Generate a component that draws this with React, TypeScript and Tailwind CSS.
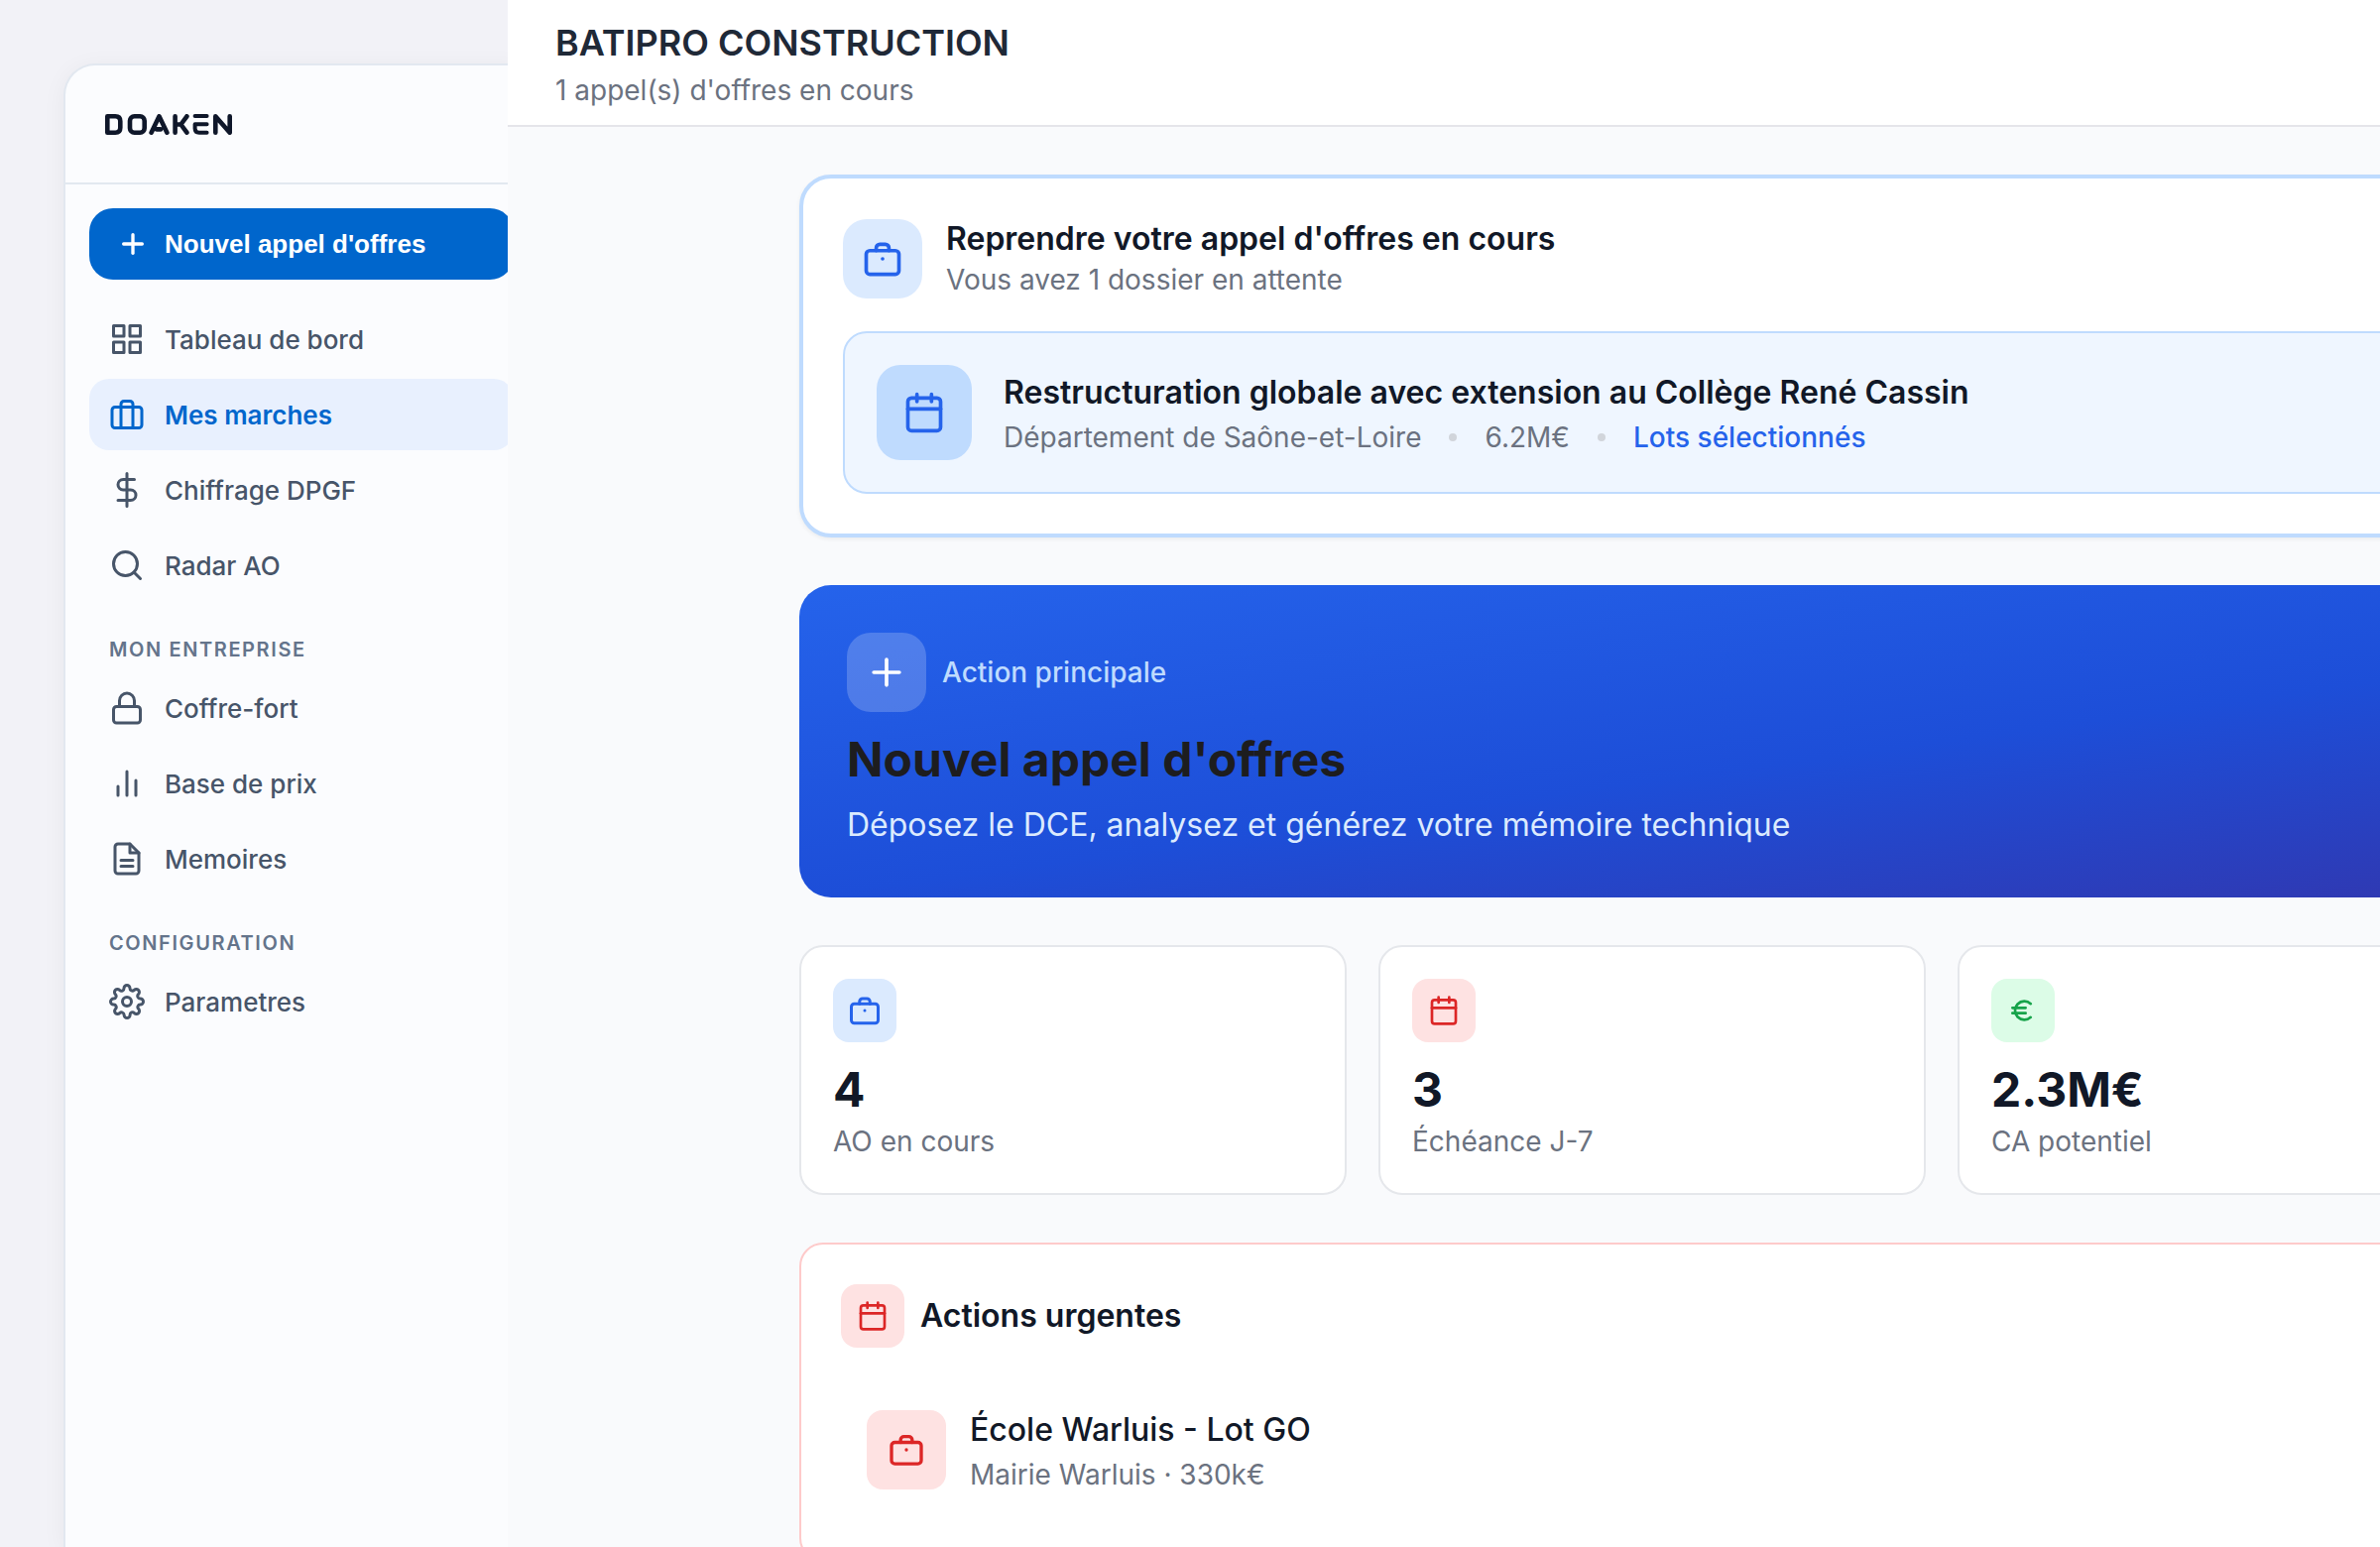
import React from 'react';
import { Calendar, Lock, Plus, Search } from 'lucide-react';
import clsx from 'clsx';

type IconProps = { className?: string };

const stroke = {
  viewBox: '0 0 24 24',
  fill: 'none',
  stroke: 'currentColor',
  strokeWidth: 2,
  strokeLinecap: 'round' as const,
  strokeLinejoin: 'round' as const,
  'aria-hidden': true,
};

function Logo() {
  return (
    <svg
      viewBox="0 0 128 21"
      className="h-[21px] w-32 text-[#0f172a]"
      fill="none"
      stroke="currentColor"
      strokeWidth="4.6"
      strokeLinejoin="round"
      strokeLinecap="round"
      role="img"
      aria-label="Doaken"
    >
      <path d="M2.3 2.3h8q5 0 5 5v6.4q0 5-5 5h-8z" />
      <rect x="25" y="2.3" width="14.7" height="16.4" rx="4.5" />
      <path d="M46.6 18.7 54.5 2.3l7.9 16.4M52 15.4h4" />
      <path d="M70.6 2.3v16.4M82.4 2.3l-6 8.2 6 8.2M70.6 10.5h5.8" />
      <path
        strokeWidth="4"
        d="M90.6 2.1h12M102.6 10.2h-12v4.4q0 4.2 4.2 4.2h7.8"
      />
      <path d="M111.3 18.7V2.3l14.4 16.4V2.3" />
    </svg>
  );
}

function GridIcon({ className }: IconProps) {
  return (
    <svg {...stroke} className={className}>
      <path d="M3 3h7v7H3zM14 3h7v7h-7zM14 14h7v7h-7zM3 14h7v7H3z" />
    </svg>
  );
}

function SuitcaseIcon({ className }: IconProps) {
  return (
    <svg {...stroke} className={className}>
      <rect x="2" y="7" width="20" height="14" rx="2" />
      <path d="M16 21V5a2 2 0 0 0-2-2h-4a2 2 0 0 0-2 2v16" />
    </svg>
  );
}

function DollarIcon({ className }: IconProps) {
  return (
    <svg {...stroke} className={className}>
      <path d="M12 1v22M17 5H9.5a3.5 3.5 0 0 0 0 7h5a3.5 3.5 0 0 1 0 7H6" />
    </svg>
  );
}

function BarsIcon({ className }: IconProps) {
  return (
    <svg {...stroke} className={className}>
      <path d="M18 20V10M12 20V4M6 20v-6" />
    </svg>
  );
}

function FileIcon({ className }: IconProps) {
  return (
    <svg {...stroke} className={className}>
      <path d="M14 2H6a2 2 0 0 0-2 2v16a2 2 0 0 0 2 2h12a2 2 0 0 0 2-2V8z" />
      <path d="M14 2v6h6M16 13H8M16 17H8" />
    </svg>
  );
}

function GearIcon({ className }: IconProps) {
  return (
    <svg {...stroke} className={className}>
      <circle cx="12" cy="12" r="3" />
      <path d="M19.4 15a1.65 1.65 0 0 0 .33 1.82l.06.06a2 2 0 0 1 0 2.83 2 2 0 0 1-2.83 0l-.06-.06a1.65 1.65 0 0 0-1.82-.33 1.65 1.65 0 0 0-1 1.51V21a2 2 0 0 1-2 2 2 2 0 0 1-2-2v-.09A1.65 1.65 0 0 0 9 19.4a1.65 1.65 0 0 0-1.82.33l-.06.06a2 2 0 0 1-2.83 0 2 2 0 0 1 0-2.83l.06-.06a1.65 1.65 0 0 0 .33-1.82 1.65 1.65 0 0 0-1.51-1H3a2 2 0 0 1-2-2 2 2 0 0 1 2-2h.09A1.65 1.65 0 0 0 4.6 9a1.65 1.65 0 0 0-.33-1.82l-.06-.06a2 2 0 0 1 0-2.83 2 2 0 0 1 2.83 0l.06.06a1.65 1.65 0 0 0 1.82.33H9a1.65 1.65 0 0 0 1-1.51V3a2 2 0 0 1 2-2 2 2 0 0 1 2 2v.09a1.65 1.65 0 0 0 1 1.51 1.65 1.65 0 0 0 1.82-.33l.06-.06a2 2 0 0 1 2.83 0 2 2 0 0 1 0 2.83l-.06.06a1.65 1.65 0 0 0-.33 1.82V9a1.65 1.65 0 0 0 1.51 1H21a2 2 0 0 1 2 2 2 2 0 0 1-2 2h-.09a1.65 1.65 0 0 0-1.51 1z" />
    </svg>
  );
}

function BriefcaseIcon({ className }: IconProps) {
  return (
    <svg {...stroke} className={className}>
      <rect x="3" y="7.5" width="18" height="13" rx="2" />
      <path d="M8.5 7.5V6a2 2 0 0 1 2-2h3a2 2 0 0 1 2 2v1.5M12 12h.01" />
    </svg>
  );
}

function EuroIcon({ className }: IconProps) {
  return (
    <svg {...stroke} className={className}>
      <path d="M17.8 6.9a7 7 0 1 0 0 10.2M4 10h10M4 14h10" />
    </svg>
  );
}

const mainLinks = [
  { label: 'Tableau de bord', icon: GridIcon },
  { label: 'Mes marches', icon: SuitcaseIcon, active: true },
  { label: 'Chiffrage DPGF', icon: DollarIcon },
  { label: 'Radar AO', icon: Search },
];

const companyLinks = [
  { label: 'Coffre-fort', icon: Lock },
  { label: 'Base de prix', icon: BarsIcon },
  { label: 'Memoires', icon: FileIcon },
];

const configLinks = [{ label: 'Parametres', icon: GearIcon }];

const stats = [
  {
    label: 'AO en cours',
    value: '4',
    icon: BriefcaseIcon,
    iconSize: 'size-9',
    tone: 'bg-[#dbeafe] text-[#2563eb]',
  },
  {
    label: 'Échéance J-7',
    value: '3',
    icon: Calendar,
    iconSize: 'size-8',
    tone: 'bg-[#fee2e2] text-[#dc2626]',
  },
  {
    label: 'CA potentiel',
    value: '2.3M€',
    icon: EuroIcon,
    iconSize: 'size-8',
    tone: 'bg-[#dcfce7] text-[#16a34a]',
  },
];

type NavLink = {
  label: string;
  icon: React.ComponentType<IconProps>;
  active?: boolean;
};

function NavList({ title, links }: { title?: string; links: NavLink[] }) {
  return (
    <div>
      {title && (
        <h2 className="px-5 pt-8 pb-[6px] text-[20px] leading-[34px] font-semibold tracking-[0.08em] text-[#64748b] uppercase">
          {title}
        </h2>
      )}
      <ul className="flex flex-col gap-1">
        {links.map(({ label, icon: Icon, active }) => (
          <li key={label}>
            <a
              href="#"
              className={clsx(
                'flex h-[72px] items-center gap-5 rounded-[20px] px-5 text-[26px]',
                active
                  ? 'bg-[#e8f0fe] font-semibold text-[#0066cc]'
                  : 'font-medium text-[#475569]'
              )}
            >
              <Icon className="size-9" />
              {label}
            </a>
          </li>
        ))}
      </ul>
    </div>
  );
}

function Sidebar() {
  return (
    <aside className="w-[512px] shrink-0 overflow-hidden pt-16 pl-16">
      <div className="h-full w-[480px] rounded-t-[32px] border-2 border-b-0 border-[#e2e8f0] bg-[#fbfcfe] shadow-[0_4px_24px_rgba(15,23,42,0.05)]">
        <div className="flex h-[120px] items-center border-b-2 border-[#e2e8f0] px-10">
          <Logo />
        </div>
        <nav className="p-6">
          <button
            type="button"
            className="mb-6 flex h-[72px] w-full items-center gap-4 rounded-[24px] bg-[#0066cc] px-7 font-['Liberation_Sans',Arial,sans-serif] text-[26px] font-semibold text-white"
          >
            <Plus className="size-8" strokeWidth={2.5} />
            Nouvel appel d'offres
          </button>
          <NavList links={mainLinks} />
          <NavList title="Mon entreprise" links={companyLinks} />
          <NavList title="Configuration" links={configLinks} />
        </nav>
      </div>
    </aside>
  );
}

function ResumeCard() {
  return (
    <section className="rounded-[32px] border-4 border-[#bfdbfe] bg-white p-10 shadow-[0_2px_4px_rgba(0,0,0,0.06)]">
      <div className="mb-8 flex items-center gap-6">
        <div className="flex size-20 items-center justify-center rounded-[24px] bg-[#dbeafe] text-[#2563eb]">
          <BriefcaseIcon className="size-11" />
        </div>
        <div>
          <h2 className="text-[32px] leading-[42px] font-semibold text-[#111827]">
            Reprendre votre appel d'offres en cours
          </h2>
          <p className="text-[28px] leading-10 text-[#6b7280]">
            Vous avez 1 dossier en attente
          </p>
        </div>
      </div>
      <a
        href="#"
        className="flex h-[164px] items-center gap-8 rounded-[24px] border-2 border-[#bfdbfe] bg-[#eff6ff] px-8"
      >
        <div className="flex size-24 items-center justify-center rounded-[24px] bg-[#bfdbfe] text-[#2563eb]">
          <Calendar className="size-11" />
        </div>
        <div>
          <p className="text-[32px] leading-[50px] font-semibold text-[#111827]">
            Restructuration globale avec extension au Collège René Cassin
          </p>
          <div className="flex items-center gap-7 text-[28px] leading-10 text-[#6b7280]">
            <span>Département de Saône-et-Loire</span>
            <span className="size-2 rounded-full bg-[#d1d5db]" />
            <span>6.2M€</span>
            <span className="size-2 rounded-full bg-[#d1d5db]" />
            <span className="font-medium text-[#2563eb]">Lots sélectionnés</span>
          </div>
        </div>
      </a>
    </section>
  );
}

function NewTenderCard() {
  return (
    <a
      href="#"
      className="block rounded-[32px] bg-[linear-gradient(to_bottom_right,#2563eb,#1d4ed8,#3730a3)] p-12"
    >
      <div className="mb-4 flex items-center gap-4">
        <div className="flex size-20 items-center justify-center rounded-[24px] bg-white/20 text-white">
          <Plus className="size-11" />
        </div>
        <span className="text-[28px] leading-10 font-medium text-[#bfdbfe]">
          Action principale
        </span>
      </div>
      <h2 className="mb-2 text-[48px] leading-16 font-bold text-[#1d1d1f]">
        Nouvel appel d'offres
      </h2>
      <p className="text-[32px] leading-[51px] text-[#dbeafe]">
        Déposez le DCE, analysez et générez votre mémoire technique
      </p>
    </a>
  );
}

function Stats() {
  return (
    <div className="grid grid-cols-4 gap-8">
      {stats.map(({ label, value, icon: Icon, iconSize, tone }) => (
        <div key={label} className="rounded-[24px] border-2 border-[#e5e7eb] bg-white p-8">
          <div className={clsx('mb-4 flex size-16 items-center justify-center rounded-2xl', tone)}>
            <Icon className={iconSize} />
          </div>
          <p className="text-[48px] leading-16 font-bold text-[#111827]">{value}</p>
          <p className="text-[28px] leading-10 text-[#6b7280]">{label}</p>
        </div>
      ))}
    </div>
  );
}

function UrgentCard() {
  return (
    <section className="rounded-[24px] border-2 border-[#fecaca] bg-white p-10">
      <div className="mb-8 flex items-center gap-4">
        <div className="flex size-16 items-center justify-center rounded-2xl bg-[#fee2e2] text-[#dc2626]">
          <Calendar className="size-8" />
        </div>
        <h2 className="text-[32px] leading-[42px] font-semibold text-[#111827]">
          Actions urgentes
        </h2>
      </div>
      <a
        href="#"
        className="flex items-center gap-6 rounded-[24px] border-2 border-transparent p-6"
      >
        <div className="flex size-20 items-center justify-center rounded-2xl bg-[#fee2e2] text-[#dc2626]">
          <BriefcaseIcon className="size-10" />
        </div>
        <div>
          <p className="text-[32px] leading-[50px] font-medium text-[#111827]">
            École Warluis - Lot GO
          </p>
          <p className="text-[28px] leading-10 text-[#6b7280]">Mairie Warluis · 330k€</p>
        </div>
      </a>
    </section>
  );
}

function App() {
  return (
    <div className="h-screen overflow-hidden bg-[#f2f2f7] font-['Inter',sans-serif]">
      <div className="flex h-full min-w-[3404px]">
        <Sidebar />
        <div className="flex min-w-0 flex-1 flex-col bg-[#f9fafc]">
          <header className="flex h-32 shrink-0 flex-col justify-center border-b-2 border-[#e5e5ea] bg-white px-12">
            <h1 className="text-[36px] leading-14 font-semibold text-[#1f2937]">
              BATIPRO CONSTRUCTION
            </h1>
            <p className="text-[28px] leading-10 text-[#6b7280]">
              1 appel(s) d'offres en cours
            </p>
          </header>
          <main className="mx-auto flex w-full max-w-[2304px] flex-col gap-12 py-12">
            <ResumeCard />
            <NewTenderCard />
            <Stats />
            <UrgentCard />
          </main>
        </div>
      </div>
    </div>
  );
}

export default App;
